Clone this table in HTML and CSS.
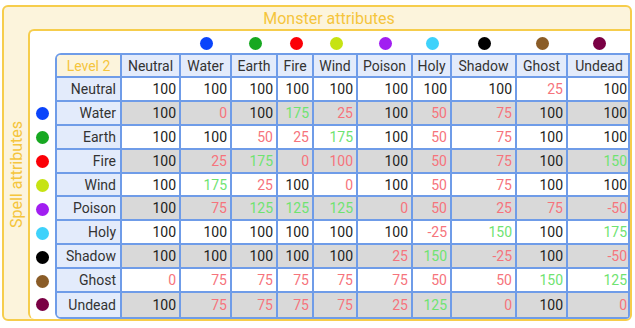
FILE: index.html
```html
<!DOCTYPE html>
<html>
<head>
<meta charset="utf-8">
<link rel="stylesheet" href="styles.css">
</head>
<body>
<div class="outer">
  <div class="corner"></div>
  <div class="title">Monster attributes</div>
  <div class="side"><span class="side-text">Spell attributes</span></div>
  <div class="inner">
    <div class="corner"></div>
    <div class="dotrow">
      <span></span><span></span><span></span>
      <span><i class="dot water"></i></span>
      <span><i class="dot earth"></i></span>
      <span><i class="dot fire"></i></span>
      <span><i class="dot wind"></i></span>
      <span><i class="dot poison"></i></span>
      <span><i class="dot holy"></i></span>
      <span><i class="dot shadow"></i></span>
      <span><i class="dot ghost"></i></span>
      <span><i class="dot undead"></i></span>
    </div>
    <div class="dotcol">
      <span></span><span></span><span></span>
      <span><i class="dot water"></i></span>
      <span><i class="dot earth"></i></span>
      <span><i class="dot fire"></i></span>
      <span><i class="dot wind"></i></span>
      <span><i class="dot poison"></i></span>
      <span><i class="dot holy"></i></span>
      <span><i class="dot shadow"></i></span>
      <span><i class="dot ghost"></i></span>
      <span><i class="dot undead"></i></span>
    </div>
    <div class="grid">
      <div class="c level">Level 2</div>
      <div class="c head">Neutral</div><div class="c head">Water</div><div class="c head">Earth</div><div class="c head">Fire</div><div class="c head">Wind</div><div class="c head">Poison</div><div class="c head">Holy</div><div class="c head">Shadow</div><div class="c head">Ghost</div><div class="c head">Undead</div>

      <div class="c lab">Neutral</div>
      <div class="c v">100</div><div class="c v">100</div><div class="c v">100</div><div class="c v">100</div><div class="c v">100</div><div class="c v">100</div><div class="c v">100</div><div class="c v">100</div><div class="c v lo">25</div><div class="c v">100</div>

      <div class="c lab">Water</div>
      <div class="c v g">100</div><div class="c v g lo">0</div><div class="c v g">100</div><div class="c v g hi">175</div><div class="c v g lo">25</div><div class="c v g">100</div><div class="c v g lo">50</div><div class="c v g lo">75</div><div class="c v g">100</div><div class="c v g">100</div>

      <div class="c lab">Earth</div>
      <div class="c v">100</div><div class="c v">100</div><div class="c v lo">50</div><div class="c v lo">25</div><div class="c v hi">175</div><div class="c v">100</div><div class="c v lo">50</div><div class="c v lo">75</div><div class="c v">100</div><div class="c v">100</div>

      <div class="c lab">Fire</div>
      <div class="c v g">100</div><div class="c v g lo">25</div><div class="c v g hi">175</div><div class="c v g lo">0</div><div class="c v g lo">100</div><div class="c v g">100</div><div class="c v g lo">50</div><div class="c v g lo">75</div><div class="c v g">100</div><div class="c v g hi">150</div>

      <div class="c lab">Wind</div>
      <div class="c v">100</div><div class="c v hi">175</div><div class="c v lo">25</div><div class="c v">100</div><div class="c v lo">0</div><div class="c v">100</div><div class="c v lo">50</div><div class="c v lo">75</div><div class="c v">100</div><div class="c v">100</div>

      <div class="c lab">Poison</div>
      <div class="c v g">100</div><div class="c v g lo">75</div><div class="c v g hi">125</div><div class="c v g hi">125</div><div class="c v g hi">125</div><div class="c v g lo">0</div><div class="c v g lo">50</div><div class="c v g lo">25</div><div class="c v g lo">75</div><div class="c v g lo">-50</div>

      <div class="c lab">Holy</div>
      <div class="c v">100</div><div class="c v">100</div><div class="c v">100</div><div class="c v">100</div><div class="c v">100</div><div class="c v">100</div><div class="c v lo">-25</div><div class="c v hi">150</div><div class="c v">100</div><div class="c v hi">175</div>

      <div class="c lab">Shadow</div>
      <div class="c v g">100</div><div class="c v g">100</div><div class="c v g">100</div><div class="c v g">100</div><div class="c v g">100</div><div class="c v g lo">25</div><div class="c v g hi">150</div><div class="c v g lo">-25</div><div class="c v g">100</div><div class="c v g lo">-50</div>

      <div class="c lab">Ghost</div>
      <div class="c v lo">0</div><div class="c v lo">75</div><div class="c v lo">75</div><div class="c v lo">75</div><div class="c v lo">75</div><div class="c v lo">75</div><div class="c v lo">50</div><div class="c v lo">50</div><div class="c v hi">150</div><div class="c v hi">125</div>

      <div class="c lab">Undead</div>
      <div class="c v g">100</div><div class="c v g lo">75</div><div class="c v g lo">75</div><div class="c v g lo">75</div><div class="c v g lo">75</div><div class="c v g lo">25</div><div class="c v g hi">125</div><div class="c v g lo">0</div><div class="c v g">100</div><div class="c v g lo">0</div>
    </div>
  </div>
</div>
</body>
</html>
```

FILE: styles.css
```css
* { box-sizing: border-box; }
html, body { margin: 0; padding: 0; background: #fff; }
body {
  font-family: Roboto, "Noto Sans", sans-serif;
  font-size: 14px;
  color: #222;
}
.outer {
  margin: 5px 0 0 2px;
  width: 630px;
  height: 316px;
  border: 2px solid #f6cd4c;
  border-radius: 6px;
  background: #fcf4dc;
  display: grid;
  grid-template-columns: 24px 1fr;
  grid-template-rows: 22px 1fr;
  overflow: hidden;
}
.title {
  color: #f5c53c;
  font-size: 16px;
  display: flex;
  align-items: center;
  justify-content: center;
  padding-top: 1px;
}
.side {
  display: flex;
  align-items: center;
  justify-content: center;
}
.side-text {
  writing-mode: vertical-rl;
  transform: rotate(180deg);
  color: #f5c53c;
  font-size: 16px;
}
.inner {
  background: #fff;
  border-top: 2px solid #f6cd4c;
  border-left: 2px solid #f6cd4c;
  border-radius: 6px 0 0 6px;
  display: grid;
  grid-template-columns: 25px 1fr;
  grid-template-rows: 22px 1fr;
}
.dotrow {
  display: grid;
  grid-template-columns: 2px 65px 59px 51px 46px 36px 44px 55px 39px 65px 51px 62px;
}
.dotcol {
  display: grid;
  grid-template-rows: 2px 23px repeat(10, 23.9px);
}
.dotrow span, .dotcol span {
  display: flex;
  align-items: center;
  justify-content: center;
}
.dot {
  display: block;
  width: 13px;
  height: 13px;
  border-radius: 50%;
}
.dotrow .dot { margin-top: 2px; }
.water { background: #0a44fb; }
.earth { background: #17a821; }
.fire { background: #fb0007; }
.wind { background: #c6e313; }
.poison { background: #a11ef1; }
.holy { background: #3ed2fb; }
.shadow { background: #000; }
.ghost { background: #8a5c27; }
.undead { background: #7a0044; }
.grid {
  border: 2px solid #6f9ce8;
  border-radius: 6px 0 0 6px;
  overflow: hidden;
  display: grid;
  grid-template-columns: 65px 59px 51px 46px 36px 44px 55px 39px 65px 51px 62px;
  grid-template-rows: 23px repeat(10, 23.9px);
  width: 575px;
}
.c {
  border-right: 2px solid #6f9ce8;
  border-bottom: 2px solid #6f9ce8;
  display: flex;
  align-items: center;
  justify-content: flex-end;
  padding-right: 3px;
  white-space: nowrap;
  background: #fff;
}
.c:nth-child(11n) { border-right: none; }
.c:nth-last-child(-n+11) { border-bottom: none; }
.level {
  background: #fcf4dc;
  color: #f5c53c;
  justify-content: center;
  padding: 0;
}
.head {
  background: #e3ebfb;
  color: #333;
  justify-content: center;
  padding: 0;
}
.lab {
  background: #e3ebfb;
  color: #333;
  padding-right: 4px;
}
.v.g { background: #d9d9d9; }
.lo { color: #f6747c; }
.hi { color: #6fe371; }
```
